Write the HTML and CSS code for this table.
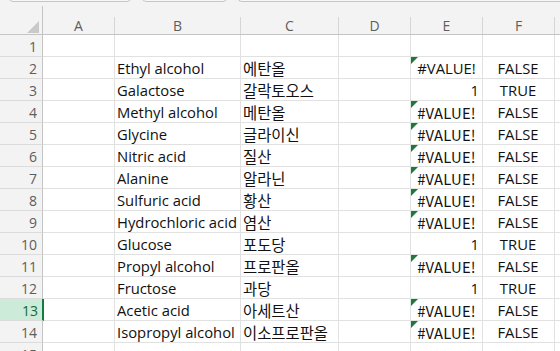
FILE: index.html
```html
<!DOCTYPE html>
<html lang="ko">
<head>
<meta charset="utf-8">
<title>Sheet</title>
<link rel="stylesheet" href="styles.css">
</head>
<body>
<div class="toolbar">
  <div class="tbtn tbtn-1"></div>
  <div class="tbtn tbtn-2"></div>
  <div class="tbtn tbtn-3"></div>
</div>
<div class="colhead">
  <div class="corner"><span class="corner-tri"></span></div>
  <div class="ch">A</div>
  <div class="ch">B</div>
  <div class="ch">C</div>
  <div class="ch">D</div>
  <div class="ch">E</div>
  <div class="ch">F</div>
  <div class="ch ch-last"></div>
</div>
<div class="sheet">
  <div class="rh">1</div><div class="c"></div><div class="c"></div><div class="c"></div><div class="c"></div><div class="c"></div><div class="c"></div><div class="c"></div>

  <div class="rh">2</div><div class="c"></div><div class="c">Ethyl alcohol</div><div class="c ko">에탄올</div><div class="c"></div><div class="c err">#VALUE!</div><div class="c ctr">FALSE</div><div class="c"></div>

  <div class="rh">3</div><div class="c"></div><div class="c">Galactose</div><div class="c ko">갈락토오스</div><div class="c"></div><div class="c num">1</div><div class="c ctr">TRUE</div><div class="c"></div>

  <div class="rh">4</div><div class="c"></div><div class="c">Methyl alcohol</div><div class="c ko">메탄올</div><div class="c"></div><div class="c err err-ko">#VALUE!</div><div class="c ctr">FALSE</div><div class="c"></div>

  <div class="rh">5</div><div class="c"></div><div class="c">Glycine</div><div class="c ko">글라이신</div><div class="c"></div><div class="c err err-ko">#VALUE!</div><div class="c ctr">FALSE</div><div class="c"></div>

  <div class="rh">6</div><div class="c"></div><div class="c">Nitric acid</div><div class="c ko">질산</div><div class="c"></div><div class="c err err-ko">#VALUE!</div><div class="c ctr">FALSE</div><div class="c"></div>

  <div class="rh">7</div><div class="c"></div><div class="c">Alanine</div><div class="c ko">알라닌</div><div class="c"></div><div class="c err err-ko">#VALUE!</div><div class="c ctr">FALSE</div><div class="c"></div>

  <div class="rh">8</div><div class="c"></div><div class="c">Sulfuric acid</div><div class="c ko">황산</div><div class="c"></div><div class="c err err-ko">#VALUE!</div><div class="c ctr">FALSE</div><div class="c"></div>

  <div class="rh">9</div><div class="c"></div><div class="c">Hydrochloric acid</div><div class="c ko">염산</div><div class="c"></div><div class="c err err-ko">#VALUE!</div><div class="c ctr">FALSE</div><div class="c"></div>

  <div class="rh">10</div><div class="c"></div><div class="c">Glucose</div><div class="c ko">포도당</div><div class="c"></div><div class="c num">1</div><div class="c ctr">TRUE</div><div class="c"></div>

  <div class="rh">11</div><div class="c"></div><div class="c">Propyl alcohol</div><div class="c ko">프로판올</div><div class="c"></div><div class="c err err-ko">#VALUE!</div><div class="c ctr">FALSE</div><div class="c"></div>

  <div class="rh">12</div><div class="c"></div><div class="c">Fructose</div><div class="c ko">과당</div><div class="c"></div><div class="c num">1</div><div class="c ctr">TRUE</div><div class="c"></div>

  <div class="rh rh-sel">13</div><div class="c"></div><div class="c">Acetic acid</div><div class="c ko">아세트산</div><div class="c"></div><div class="c err err-ko">#VALUE!</div><div class="c ctr">FALSE</div><div class="c"></div>

  <div class="rh">14</div><div class="c"></div><div class="c">Isopropyl alcohol</div><div class="c ko">이소프로판올</div><div class="c"></div><div class="c err err-ko">#VALUE!</div><div class="c ctr">FALSE</div><div class="c"></div>

  <div class="rh">15</div><div class="c"></div><div class="c"></div><div class="c"></div><div class="c"></div><div class="c"></div><div class="c"></div><div class="c"></div>
</div>
</body>
</html>
```

FILE: styles.css
```css
html, body {
  margin: 0;
  padding: 0;
  background: #ffffff;
  overflow: hidden;
}

body {
  width: 560px;
  height: 351px;
  font-family: "Open Sans", "Noto Sans", "Noto Sans CJK KR", sans-serif;
  color: #111111;
}

.toolbar {
  height: 2px;
  background: #f3f3f3;
  display: flex;
  align-items: flex-end;
  overflow: hidden;
  padding-left: 9px;
  gap: 11px;
}

.tbtn {
  height: 20px;
  flex: none;
  box-sizing: border-box;
  border: 1px solid #c6c6c6;
  border-radius: 0 0 4px 4px;
  background: #f7f7f7;
}

.tbtn-1 { width: 122px; }
.tbtn-2 { width: 85px; }
.tbtn-3 { flex: 1; border-right: none; border-radius: 0 0 0 4px; }

.colhead,
.sheet {
  display: grid;
  grid-template-columns: 43px 72px 126px 98px 72px 72px 72px 1fr;
}

.colhead {
  height: 33px;
  box-sizing: border-box;
  background: #f3f3f3;
  border-bottom: 1px solid #c4c4c4;
  align-items: end;
}

.corner {
  height: 28px;
  box-sizing: border-box;
  border-right: 1px solid #c4c4c4;
  position: relative;
}

.corner-tri {
  position: absolute;
  right: 3px;
  bottom: 1px;
  width: 0;
  height: 0;
  border-left: 12px solid transparent;
  border-bottom: 12px solid #c9c9c9;
}

.ch {
  height: 17px;
  box-sizing: border-box;
  border-right: 1px solid #d6d6d6;
  text-align: center;
  font-size: 14px;
  line-height: 17px;
  color: #5e5e5e;
}

.ch-last { border-right: none; }

.sheet {
  grid-auto-rows: 22px;
}

.rh {
  box-sizing: border-box;
  background: #f3f3f3;
  border-right: 1px solid #c4c4c4;
  border-bottom: 1px solid #dcdcdc;
  text-align: right;
  padding-right: 5px;
  padding-top: 2px;
  font-size: 14px;
  line-height: 19px;
  color: #5e5e5e;
}

.rh-sel {
  background: #cdebd9;
  border-right: 2px solid #107c41;
  padding-right: 4px;
  color: #0f6a38;
  margin-right: -1px;
  position: relative;
  z-index: 1;
}

.c {
  box-sizing: border-box;
  border-right: 1px solid #e1e1e1;
  border-bottom: 1px solid #e1e1e1;
  font-size: 14.8px;
  line-height: 19px;
  padding: 2px 3px 0 2px;
  white-space: nowrap;
}

.ko {
  font-family: "Noto Sans CJK KR", sans-serif;
  font-size: 15.4px;
  padding-left: 2px;
}

.num { text-align: right; }

.ctr { text-align: center; }

.err {
  position: relative;
  text-align: center;
  padding-left: 3px;
}

.err::before {
  content: "";
  position: absolute;
  left: 0;
  top: 0;
  width: 0;
  height: 0;
  border-top: 7px solid #1e7a3c;
  border-right: 7px solid transparent;
}

.err-ko {
  font-family: "Noto Sans CJK KR", sans-serif;
  letter-spacing: 0.2px;
}
```
